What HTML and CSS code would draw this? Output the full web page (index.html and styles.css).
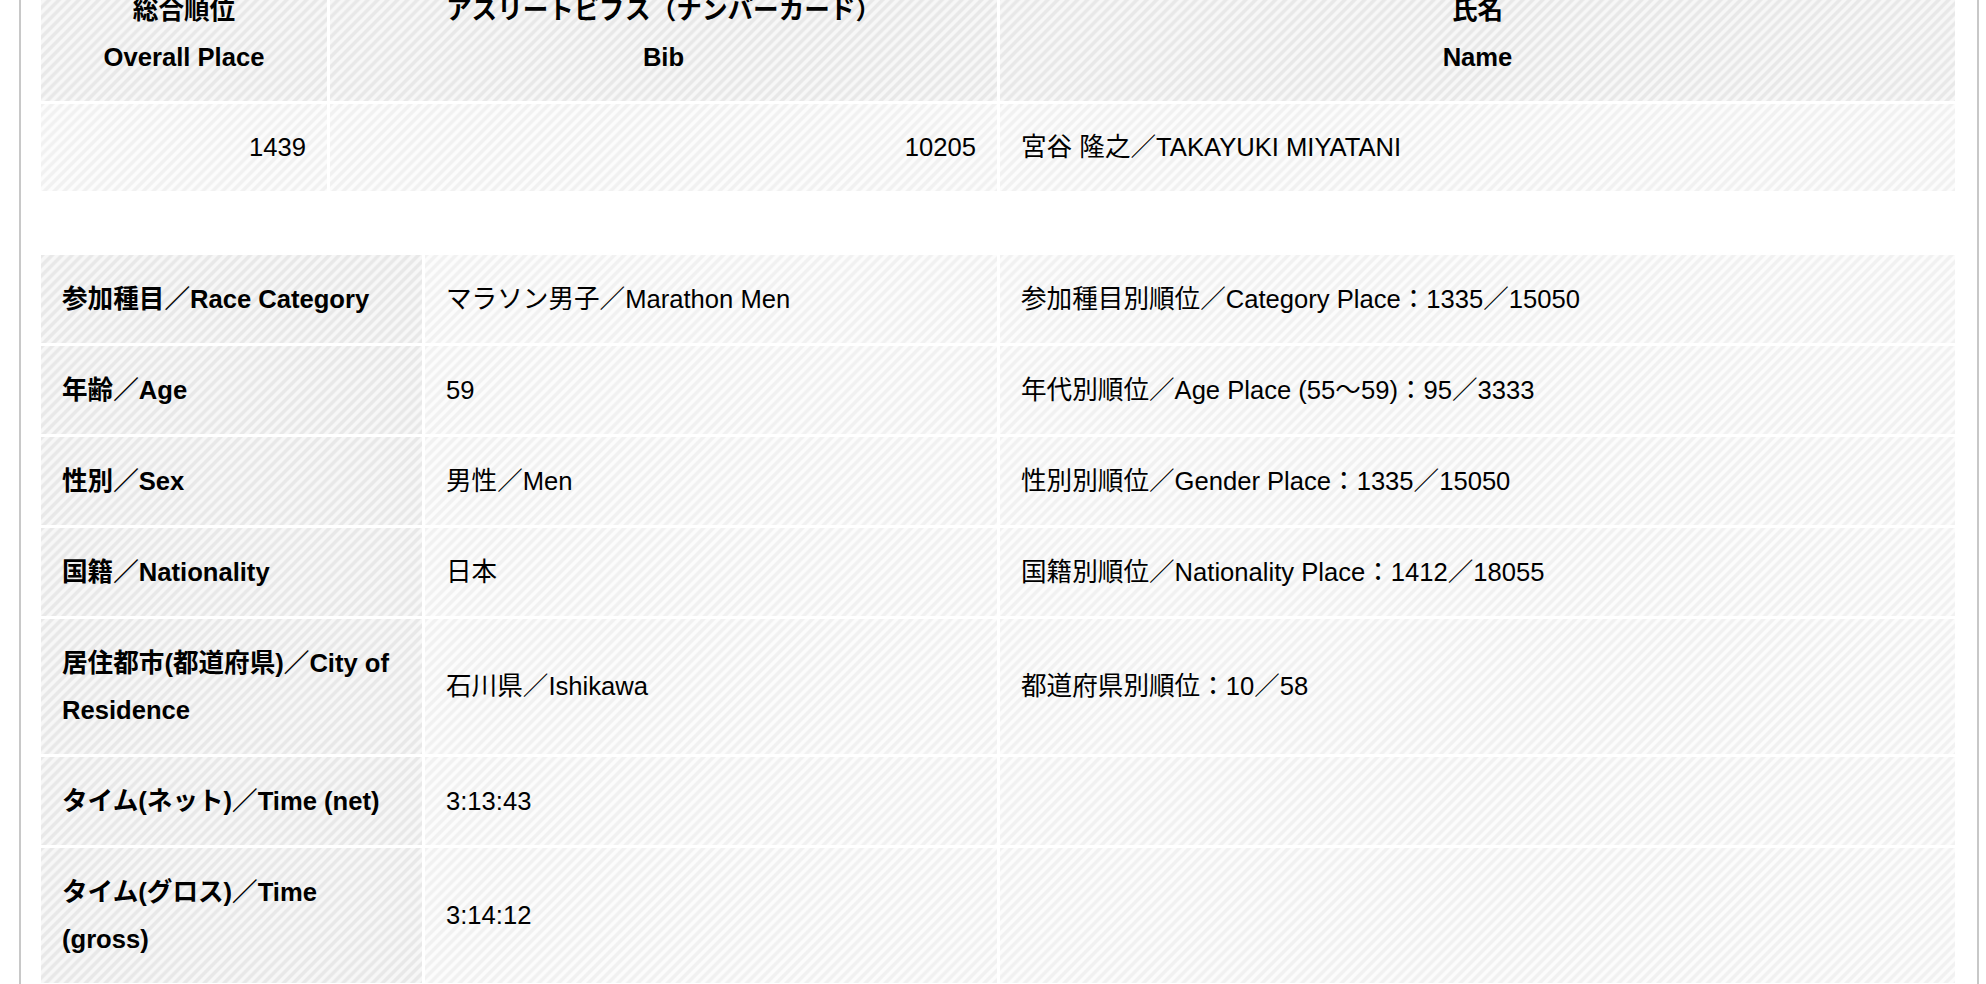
FILE: index.html
```html
<!DOCTYPE html>
<html lang="ja">
<head>
<meta charset="utf-8">
<title>Result</title>
<link rel="stylesheet" href="styles.css">
</head>
<body>
<div class="panel">
  <table class="tbl tbl-top">
    <colgroup>
      <col class="c-place">
      <col class="c-bib">
      <col class="c-name">
    </colgroup>
    <thead>
      <tr>
        <th class="hd">総合順位<br>Overall Place</th>
        <th class="hd">アスリートビブス（ナンバーカード）<br>Bib</th>
        <th class="hd">氏名<br>Name</th>
      </tr>
    </thead>
    <tbody>
      <tr>
        <td class="val num">1439</td>
        <td class="val num">10205</td>
        <td class="val">宮谷 隆之／TAKAYUKI MIYATANI</td>
      </tr>
    </tbody>
  </table>

  <table class="tbl tbl-detail">
    <colgroup>
      <col class="c-label">
      <col class="c-value">
      <col class="c-rank">
    </colgroup>
    <tbody>
      <tr>
        <th class="lbl">参加種目／Race Category</th>
        <td class="val">マラソン男子／Marathon Men</td>
        <td class="val">参加種目別順位／Category Place：1335／15050</td>
      </tr>
      <tr>
        <th class="lbl">年齢／Age</th>
        <td class="val">59</td>
        <td class="val">年代別順位／Age Place (55～59)：95／3333</td>
      </tr>
      <tr>
        <th class="lbl">性別／Sex</th>
        <td class="val">男性／Men</td>
        <td class="val">性別別順位／Gender Place：1335／15050</td>
      </tr>
      <tr>
        <th class="lbl">国籍／Nationality</th>
        <td class="val">日本</td>
        <td class="val">国籍別順位／Nationality Place：1412／18055</td>
      </tr>
      <tr>
        <th class="lbl">居住都市(都道府県)／City of Residence</th>
        <td class="val">石川県／Ishikawa</td>
        <td class="val">都道府県別順位：10／58</td>
      </tr>
      <tr>
        <th class="lbl">タイム(ネット)／Time (net)</th>
        <td class="val">3:13:43</td>
        <td class="val"></td>
      </tr>
      <tr>
        <th class="lbl">タイム(グロス)／Time (gross)</th>
        <td class="val">3:14:12</td>
        <td class="val"></td>
      </tr>
    </tbody>
  </table>
</div>
</body>
</html>
```

FILE: styles.css
```css
html, body {
  margin: 0;
  padding: 0;
  background: #ffffff;
}

body {
  font-family: "Liberation Sans", Arial, "Noto Sans CJK JP", sans-serif;
  font-size: 25.6px;
  color: #000000;
}

.panel {
  box-sizing: border-box;
  width: 1960px;
  margin: -36px 0 0 19px;
  padding: 0 20px 60px 17px;
  border-left: 2px solid #c8c8c8;
  border-right: 2px solid #c8c8c8;
}

.tbl {
  width: 1919px;
  table-layout: fixed;
  border-collapse: separate;
  border-spacing: 3px;
}

.tbl-detail {
  margin-top: 58px;
}

.c-place { width: 286px; }
.c-bib { width: 667px; }
.c-name { width: 955px; }

.c-label { width: 381px; }
.c-value { width: 572px; }
.c-rank { width: 955px; }

.tbl th,
.tbl td {
  box-sizing: border-box;
  padding: 20px 21px;
  line-height: 47px;
  vertical-align: middle;
}

.tbl-detail th,
.tbl-detail td {
  padding-top: 20.5px;
  padding-bottom: 20.5px;
}

.hd {
  font-weight: bold;
  text-align: center;
  background: repeating-linear-gradient(135deg,
    #e8e8e8 0px, #e8e8e8 2px,
    #f7f7f7 3.5px, #f7f7f7 5.5px,
    #e8e8e8 7px);
}

.lbl {
  font-weight: bold;
  text-align: left;
  background: repeating-linear-gradient(135deg,
    #e8e8e8 0px, #e8e8e8 2px,
    #f7f7f7 3.5px, #f7f7f7 5.5px,
    #e8e8e8 7px);
}

.val {
  font-weight: normal;
  text-align: left;
  background: repeating-linear-gradient(135deg,
    #f1f1f1 0px, #f1f1f1 2px,
    #fcfcfc 3.5px, #fcfcfc 5.5px,
    #f1f1f1 7px);
}

.num {
  text-align: right;
}
```
